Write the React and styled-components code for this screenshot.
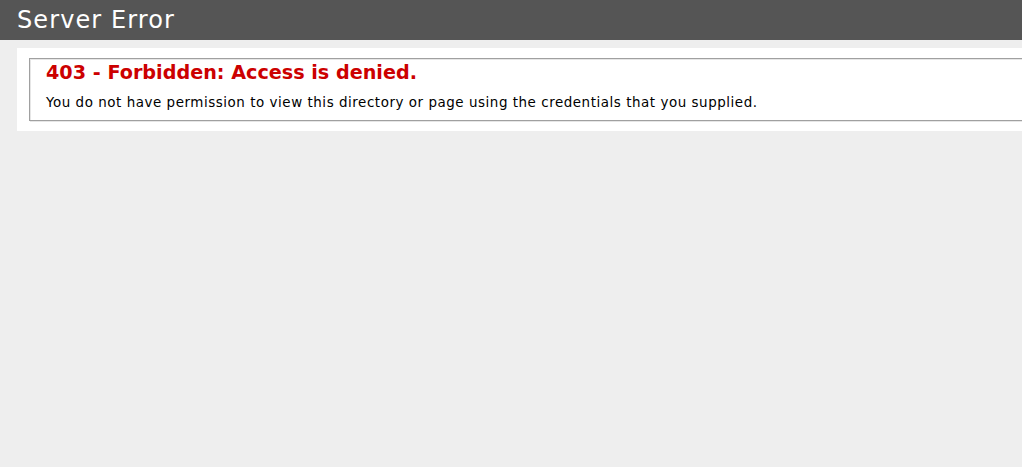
import React from 'react';
import styled, { createGlobalStyle } from 'styled-components';

const GlobalStyle = createGlobalStyle`
	html, body {
		margin: 0;
		background: #eeeeee;
		overflow: hidden;
	}
	body {
		font-size: 11.2px;
		font-family: "DejaVu Sans", Verdana, Arial, sans-serif;
	}
`;

const Header = styled.div`
	padding: 6px 17px;
	background-color: #555555;
	font-family: "DejaVu Sans", "Trebuchet MS", Verdana, sans-serif;
	color: #fff;
`;

const Title = styled.h1`
	margin: 0;
	font-size: 24px;
	font-weight: normal;
	letter-spacing: 1.1px;
	line-height: 28px;
	color: #fff;
`;

const Content = styled.div`
	margin: 0 0 0 17px;
	position: relative;
`;

const Container = styled.div`
	width: 1100px;
	margin-top: 8px;
	padding: 10px;
	background: #fff;
	position: relative;
`;

const Fieldset = styled.fieldset`
	margin: 0 2px;
	padding: 0 15px 10px 15px;
	border: 1px solid #a0a0a0;
	box-shadow: inset 1px 1px 0 #e6e6e6, 1px 1px 0 #e6e6e6;
`;

const Heading = styled.h2`
	margin: 1px 0 0 1px;
	font-size: 19.2px;
	line-height: 25px;
	color: #cc0000;
`;

const Message = styled.h3`
	margin: 10px 0 0 1px;
	font-size: 13.44px;
	line-height: 15px;
	font-weight: normal;
	letter-spacing: 0.54px;
	color: #000;
`;

const App = () => {
	return (
		<>
			<GlobalStyle />
			<Header>
				<Title>Server Error</Title>
			</Header>
			<Content>
				<Container>
					<Fieldset>
						<Heading>403 - Forbidden: Access is denied.</Heading>
						<Message>
							You do not have permission to view this directory or page using the credentials that you supplied.
						</Message>
					</Fieldset>
				</Container>
			</Content>
		</>
	);
};

export default App;
